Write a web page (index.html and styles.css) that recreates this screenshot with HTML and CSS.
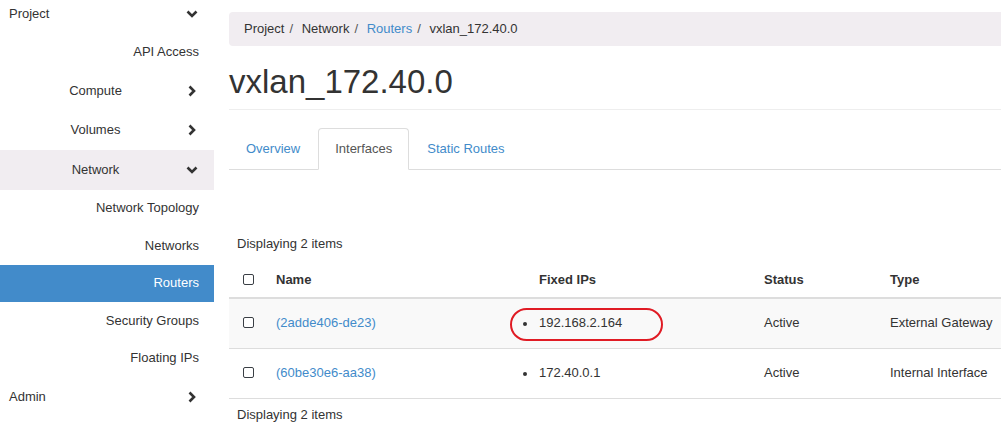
FILE: index.html
```html
<!DOCTYPE html>
<html>
<head>
<meta charset="utf-8">
<link rel="stylesheet" href="styles.css">
</head>
<body>
<nav class="sidebar">
  <ul class="menu">
    <li class="top left"><span class="label">Project</span><svg class="chev" viewBox="0 0 12 12"><polyline points="1.5,3.5 6,8 10.5,3.5"/></svg></li>
    <li class="sub"><span class="label">API Access</span></li>
    <li class="top center"><span class="label">Compute</span><svg class="chev" viewBox="0 0 12 12"><polyline points="3.5,1.5 8,6 3.5,10.5"/></svg></li>
    <li class="top center"><span class="label">Volumes</span><svg class="chev" viewBox="0 0 12 12"><polyline points="3.5,1.5 8,6 3.5,10.5"/></svg></li>
    <li class="top center open"><span class="label">Network</span><svg class="chev" viewBox="0 0 12 12"><polyline points="1.5,3.5 6,8 10.5,3.5"/></svg></li>
    <li class="sub"><span class="label">Network Topology</span></li>
    <li class="sub"><span class="label">Networks</span></li>
    <li class="sub active"><span class="label">Routers</span></li>
    <li class="sub"><span class="label">Security Groups</span></li>
    <li class="sub"><span class="label">Floating IPs</span></li>
    <li class="top left"><span class="label">Admin</span><svg class="chev" viewBox="0 0 12 12"><polyline points="3.5,1.5 8,6 3.5,10.5"/></svg></li>
  </ul>
</nav>
<main class="main">
  <ol class="breadcrumb">
    <li>Project</li>
    <li>Network</li>
    <li><a href="#">Routers</a></li>
    <li class="current">vxlan_172.40.0</li>
  </ol>
  <h1 class="page-title">vxlan_172.40.0</h1>
  <ul class="tabs">
    <li><a href="#">Overview</a></li>
    <li class="active"><a href="#">Interfaces</a></li>
    <li><a href="#">Static Routes</a></li>
  </ul>
  <div class="count">Displaying 2 items</div>
  <table class="table">
    <thead>
      <tr>
        <th class="c-check"><span class="checkbox"></span></th>
        <th class="c-name">Name</th>
        <th class="c-ips">Fixed IPs</th>
        <th class="c-status">Status</th>
        <th class="c-type">Type</th>
      </tr>
    </thead>
    <tbody>
      <tr class="striped">
        <td class="c-check"><span class="checkbox"></span></td>
        <td><a href="#">(2adde406-de23)</a></td>
        <td class="ips"><ul class="iplist"><li>192.168.2.164</li></ul><span class="highlight"></span></td>
        <td>Active</td>
        <td>External Gateway</td>
      </tr>
      <tr>
        <td class="c-check"><span class="checkbox"></span></td>
        <td><a href="#">(60be30e6-aa38)</a></td>
        <td class="ips"><ul class="iplist"><li>172.40.0.1</li></ul></td>
        <td>Active</td>
        <td>Internal Interface</td>
      </tr>
    </tbody>
    <tfoot>
      <tr><td colspan="5">Displaying 2 items</td></tr>
    </tfoot>
  </table>
</main>
</body>
</html>
```
FILE: styles.css
```css
html, body {
  margin: 0;
  padding: 0;
  background: #fff;
  overflow: hidden;
}
body {
  display: flex;
  align-items: flex-start;
  font-family: "Liberation Sans", Arial, sans-serif;
  font-size: 13px;
  line-height: 18px;
  color: #333;
  width: 1001px;
  height: 427px;
}
a { color: #428bca; text-decoration: none; }

/* Sidebar */
.sidebar {
  width: 214px;
  flex-shrink: 0;
}
.menu {
  list-style: none;
  margin: -6px 0 0 0;
  padding: 0;
}
.menu li {
  display: flex;
  align-items: center;
  color: #333;
}
.menu .top {
  height: 39.5px;
  padding-right: 16px;
}
.menu .top.left .label {
  flex: 1;
  padding-left: 9px;
  text-align: left;
}
.menu .top.center .label {
  flex: 1;
  text-align: center;
  padding-left: 5px;
}
.menu .open {
  background: #f1edf1;
}
.menu .sub {
  height: 37.5px;
  justify-content: flex-end;
  padding-right: 15px;
}
.menu .sub.active {
  background: #428bca;
  color: #fff;
}
.chev {
  width: 12px;
  height: 12px;
  fill: none;
  stroke: #333;
  stroke-width: 2.6;
  stroke-linecap: butt;
  stroke-linejoin: miter;
}

/* Main */
.main {
  width: 800px;
  flex-shrink: 0;
  margin-left: 15px;
  padding-top: 12px;
}
.breadcrumb {
  list-style: none;
  margin: 0;
  padding: 0 15px;
  height: 34px;
  line-height: 34px;
  background: #f1edf1;
  border-radius: 4px;
  display: flex;
}
.breadcrumb li + li::before {
  content: "/\00a0";
  padding: 0 5px;
  color: #555;
}
.breadcrumb .current { color: #333; }

.page-title {
  margin: 18px 0 0 0;
  font-size: 33px;
  line-height: 36px;
  font-weight: normal;
  color: #333;
  padding-bottom: 9px;
  border-bottom: 1px solid #eee;
}

.tabs {
  list-style: none;
  margin: 18px 0 0 0;
  padding: 0;
  display: flex;
  border-bottom: 1px solid #ddd;
}
.tabs li {
  margin-right: 1px;
  margin-bottom: -1px;
}
.tabs li a {
  display: block;
  padding: 0 16px;
  height: 40px;
  line-height: 40px;
  border: 1px solid transparent;
  border-radius: 4px 4px 0 0;
}
.tabs li.active a {
  color: #555;
  background: #fff;
  border-color: #ddd #ddd transparent;
}

.count {
  margin-top: 65px;
  padding-left: 8px;
}

.table {
  margin-top: 11px;
  border-collapse: collapse;
  width: 800px;
  table-layout: fixed;
}
.table th {
  text-align: left;
  font-weight: bold;
  padding: 7px 8px 8px;
  border-bottom: 2px solid #ddd;
}
.table td {
  padding: 15px 8px 16px;
  border-top: 1px solid #ddd;
}
.table tfoot td {
  padding: 7px 8px;
}
.table tr.striped td { background: #f9f9f9; }
.c-check { width: 25px; }
.table th.c-check, .table td.c-check { padding-left: 14px; padding-right: 0; }
.c-name { width: 247px; }
.c-ips { width: 209px; }
.c-status { width: 110px; }
.checkbox {
  display: inline-block;
  width: 11px;
  height: 11px;
  box-sizing: border-box;
  border: 1.5px solid #3a3f45;
  border-radius: 2px;
  vertical-align: -1px;
  background: #fff;
}
.ips { position: relative; }
.iplist {
  list-style: none;
  margin: 0 0 0 -16px;
  padding: 0;
}
.iplist li {
  display: flex;
  align-items: center;
}
.iplist li::before {
  content: "";
  width: 4px;
  height: 4px;
  border-radius: 50%;
  background: #333;
  margin-right: 12px;
  margin-top: 1px;
}
.highlight {
  position: absolute;
  left: -21px;
  top: 9px;
  width: 153px;
  height: 33px;
  box-sizing: border-box;
  border: 2px solid #e01b24;
  border-radius: 17px;
}
```
